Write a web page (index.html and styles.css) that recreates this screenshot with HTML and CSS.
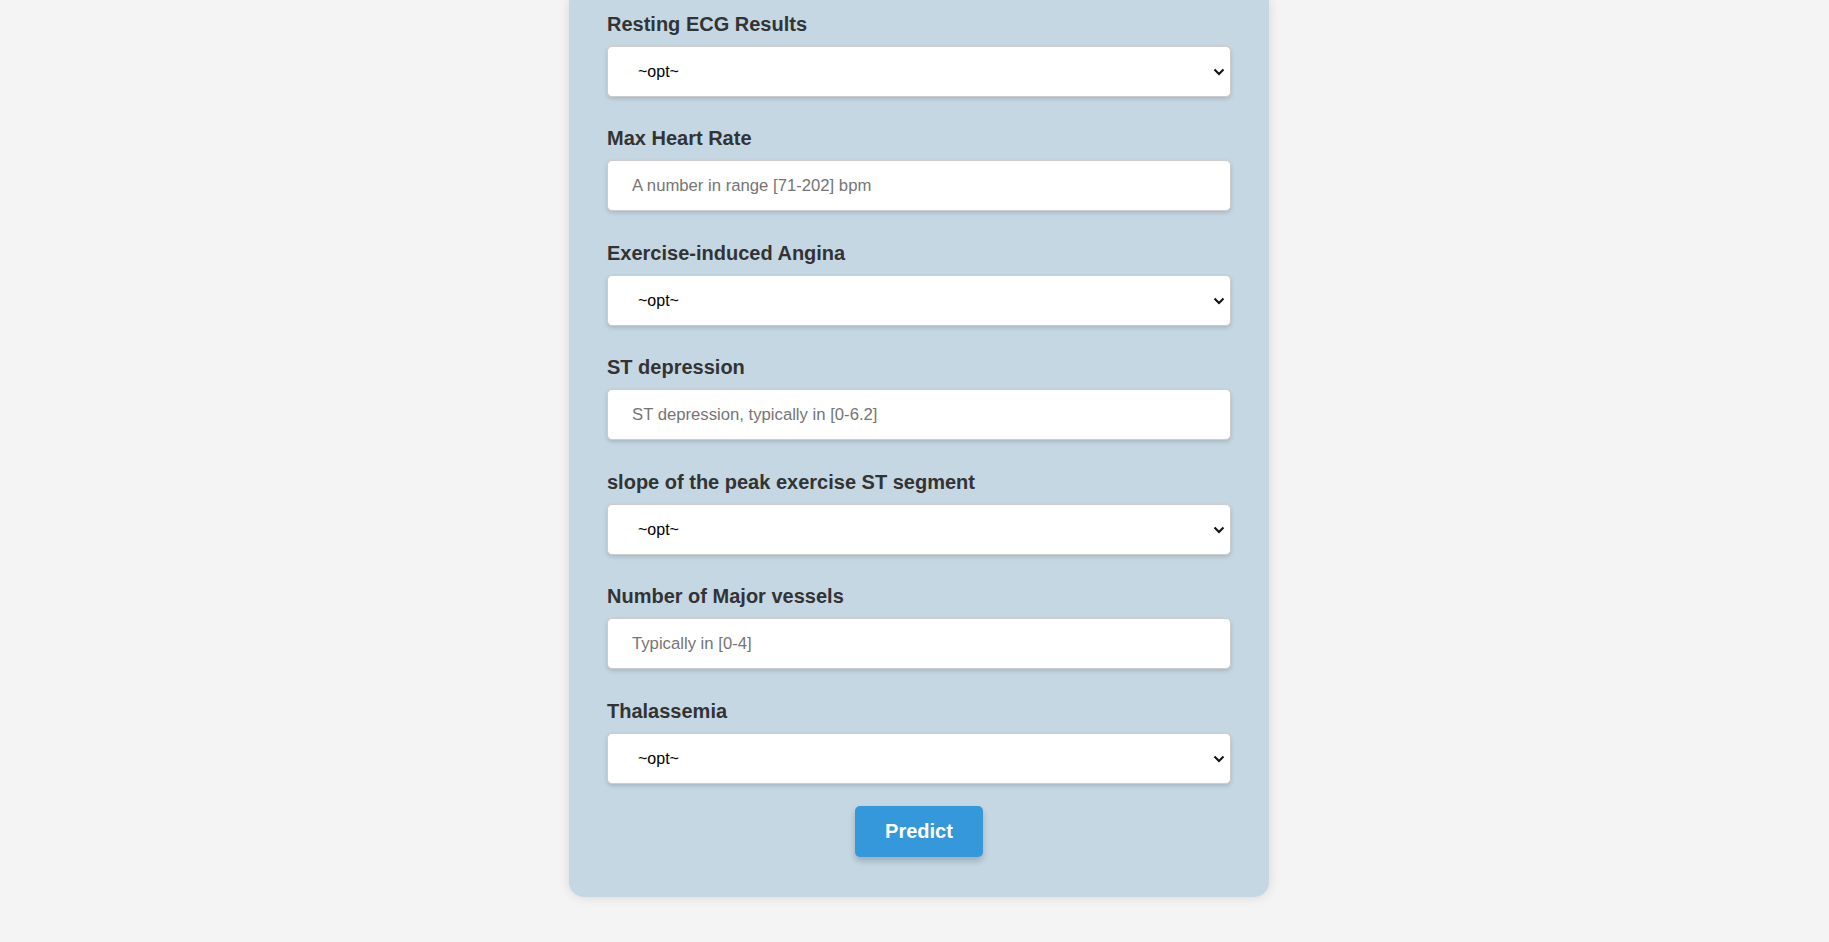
FILE: index.html
```html
<!DOCTYPE html>
<html lang="en">
<head>
<meta charset="utf-8">
<title>Heart Disease Prediction</title>
<link rel="stylesheet" href="styles.css">
</head>
<body>
<main class="page">
  <form class="card">
    <div class="group">
      <label class="label" for="restecg">Resting ECG Results</label>
      <div class="select-wrap">
        <select class="field select" id="restecg"><option>~opt~</option></select>
        <svg class="chev" width="12" height="8" viewBox="0 0 12 8"><path d="M1.5 1.5 L6 6 L10.5 1.5" fill="none" stroke="#111" stroke-width="2"/></svg>
      </div>
    </div>
    <div class="group">
      <label class="label" for="thalach">Max Heart Rate</label>
      <input class="field" id="thalach" type="text" placeholder="A number in range [71-202] bpm">
    </div>
    <div class="group">
      <label class="label" for="exang">Exercise-induced Angina</label>
      <div class="select-wrap">
        <select class="field select" id="exang"><option>~opt~</option></select>
        <svg class="chev" width="12" height="8" viewBox="0 0 12 8"><path d="M1.5 1.5 L6 6 L10.5 1.5" fill="none" stroke="#111" stroke-width="2"/></svg>
      </div>
    </div>
    <div class="group">
      <label class="label" for="oldpeak">ST depression</label>
      <input class="field" id="oldpeak" type="text" placeholder="ST depression, typically in [0-6.2]">
    </div>
    <div class="group">
      <label class="label" for="slope">slope of the peak exercise ST segment</label>
      <div class="select-wrap">
        <select class="field select" id="slope"><option>~opt~</option></select>
        <svg class="chev" width="12" height="8" viewBox="0 0 12 8"><path d="M1.5 1.5 L6 6 L10.5 1.5" fill="none" stroke="#111" stroke-width="2"/></svg>
      </div>
    </div>
    <div class="group">
      <label class="label" for="ca">Number of Major vessels</label>
      <input class="field" id="ca" type="text" placeholder="Typically in [0-4]">
    </div>
    <div class="group last">
      <label class="label" for="thal">Thalassemia</label>
      <div class="select-wrap">
        <select class="field select" id="thal"><option>~opt~</option></select>
        <svg class="chev" width="12" height="8" viewBox="0 0 12 8"><path d="M1.5 1.5 L6 6 L10.5 1.5" fill="none" stroke="#111" stroke-width="2"/></svg>
      </div>
    </div>
    <div class="actions">
      <button class="btn" type="button">Predict</button>
    </div>
  </form>
</main>
</body>
</html>
```

FILE: styles.css
```css
* { box-sizing: border-box; }

html, body {
  margin: 0;
  padding: 0;
  background: #f4f4f4;
  font-family: "Liberation Sans", Arial, sans-serif;
}

.page {
  display: flex;
  justify-content: center;
  padding-left: 9px;
  min-height: 942px;
}

.card {
  width: 700px;
  height: 897px;
  background: #c5d7e3;
  padding: 12.5px 38px 39px 38px;
  border-radius: 0 0 15px 15px;
  box-shadow: 0 0 12px rgba(0, 0, 0, 0.12);
}

.group {
  margin-bottom: 30.5px;
}

.group.last {
  margin-bottom: 0;
}

.label {
  display: block;
  font-size: 20px;
  line-height: 22px;
  font-weight: bold;
  color: #333333;
  margin-bottom: 11px;
}

.field {
  display: block;
  width: 100%;
  height: 51px;
  padding: 0 24px;
  border: 1px solid #cccccc;
  border-radius: 5px;
  background: #ffffff;
  font-family: "Liberation Sans", Arial, sans-serif;
  font-size: 16.7px;
  color: #000000;
  box-shadow: 0 2px 4px rgba(0, 0, 0, 0.15);
  outline: none;
}

.field::placeholder {
  color: #757575;
}

.select-wrap {
  position: relative;
}

.select {
  -webkit-appearance: none;
  appearance: none;
  padding-left: 30px;
  padding-right: 30px;
  font-size: 16px;
}

.chev {
  position: absolute;
  right: 6px;
  top: 22px;
  pointer-events: none;
}

.actions {
  display: flex;
  justify-content: center;
  padding-top: 22.5px;
}

.btn {
  background: #3498db;
  color: #ffffff;
  border: none;
  border-radius: 5px;
  padding: 14px 30px;
  font-family: "Liberation Sans", Arial, sans-serif;
  font-size: 20px;
  line-height: 23px;
  font-weight: bold;
  box-shadow: 0 4px 6px rgba(0, 0, 0, 0.2);
  cursor: pointer;
}
```
